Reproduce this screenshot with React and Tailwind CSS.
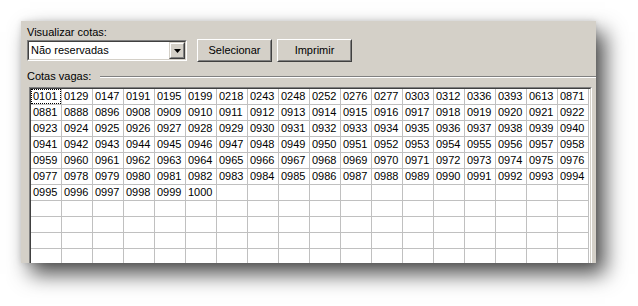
const rows = [
  ["0101", "0129", "0147", "0191", "0195", "0199", "0218", "0243", "0248", "0252", "0276", "0277", "0303", "0312", "0336", "0393", "0613", "0871"],
  ["0881", "0888", "0896", "0908", "0909", "0910", "0911", "0912", "0913", "0914", "0915", "0916", "0917", "0918", "0919", "0920", "0921", "0922"],
];

// the rest are consecutive from 0923 to 1000
for (let start = 923; start <= 1000; start += 18) {
  const row = [];
  for (let i = 0; i < 18; i++) {
    const n = start + i;
    row.push(n <= 1000 ? String(n).padStart(4, "0") : "");
  }
  rows.push(row);
}
for (let i = 0; i < 4; i++) rows.push(Array(18).fill(""));

function Button({ children }) {
  return (
    <div className="w-[75px] h-[23px] border border-t-white border-l-white border-r-[#404040] border-b-[#404040]">
      <div className="h-full border border-t-[#d4d0c8] border-l-[#d4d0c8] border-r-[#808080] border-b-[#808080] flex items-center justify-center">
        {children}
      </div>
    </div>
  );
}

export default function App() {
  return (
    <div
      className="w-[638px] h-[306px] bg-white pl-[21px] pt-[21px] text-[11px] text-black"
      style={{ fontFamily: '"Liberation Sans", Arial, sans-serif' }}
    >
      <div className="w-[575px] h-[242px] bg-[#d4d0c8] overflow-hidden pl-[6px] shadow-[9px_11px_20px_rgba(0,0,0,0.7),0_0_6px_rgba(0,0,0,0.12)]">
        <div className="mt-[5px] leading-[13px]">Visualizar cotas:</div>

        <div className="flex items-start">
          <div className="mt-[1px] w-[160px] h-[21px] border border-t-[#808080] border-l-[#808080] border-r-white border-b-white">
            <div className="h-full border border-t-[#404040] border-l-[#404040] border-r-[#d4d0c8] border-b-[#d4d0c8] bg-white flex items-center">
              <span className="flex-1 pl-[2px] leading-[13px]">Não reservadas</span>
              <div className="w-[16px] h-[17px] bg-[#d4d0c8] border border-t-[#d4d0c8] border-l-[#d4d0c8] border-r-[#404040] border-b-[#404040]">
                <div className="h-full border border-t-white border-l-white border-r-[#808080] border-b-[#808080] flex items-center justify-center">
                  <svg width="7" height="4" viewBox="0 0 7 4">
                    <path d="M0 0h7L3.5 4z" fill="#000" />
                  </svg>
                </div>
              </div>
            </div>
          </div>
          <div className="ml-[10px] flex gap-[5px]">
            <Button>Selecionar</Button>
            <Button>Imprimir</Button>
          </div>
        </div>

        <div className="mt-[8px] flex items-center leading-[13px]">
          <span>Cotas vagas:</span>
          <div className="flex-1 ml-[9px] border-t border-t-[#808080] border-b border-b-white" />
        </div>

        <div className="mt-[4px] ml-[2px] w-[563px] border border-t-[#808080] border-l-[#808080] border-r-white">
          <div className="border border-t-[#404040] border-l-[#404040] border-r-[#d4d0c8] bg-white">
            <div className="grid grid-cols-[repeat(18,31px)]">
              {rows.map((row, r) =>
                row.map((v, c) => (
                  <div
                    key={r + "-" + c}
                    className="h-[16px] border-r border-b border-[#c0c0c0] leading-[15px] whitespace-nowrap"
                  >
                    {r === 0 && c === 0 ? (
                      <div className="h-[15px] border border-dotted border-black leading-[13px] pl-[1px]">{v}</div>
                    ) : (
                      <div className="pl-[2px]">{v}</div>
                    )}
                  </div>
                ))
              )}
            </div>
          </div>
        </div>
      </div>
    </div>
  );
}
